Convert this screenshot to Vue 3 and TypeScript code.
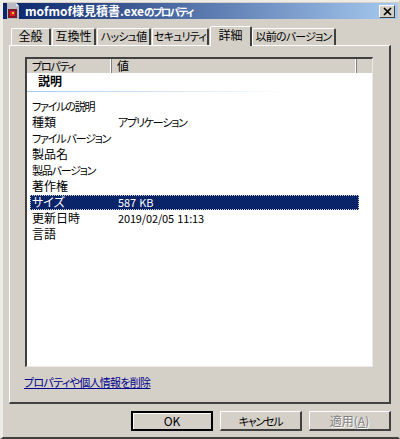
<script setup lang="ts">
const tabs = [
  { label: '全般', w: 40 },
  { label: '互換性', w: 44 },
  { label: 'ハッシュ値', w: 54, tight: true },
  { label: 'セキュリティ', w: 57, tight: true },
  { label: '詳細', w: 42, active: true },
  { label: '以前のバージョン', w: 84, tight: true },
]
const rows = [
  { k: 'ファイルの説明', v: '', tight: true },
  { k: '種類', v: 'アプリケーション', kanaVal: true },
  { k: 'ファイル バージョン', v: '', tight: true },
  { k: '製品名', v: '' },
  { k: '製品バージョン', v: '', tight: true },
  { k: '著作権', v: '' },
  { k: 'サイズ', v: '587 KB', selected: true },
  { k: '更新日時', v: '2019/02/05 11:13' },
  { k: '言語', v: '' },
]
</script>

<template>
  <div class="window">
    <div class="titlebar">
      <svg class="appicon" width="16" height="16" viewBox="0 0 16 16">
        <path d="M2 0h9l3 3v13H2z" fill="#b9b9c4" />
        <path d="M11 0l3 3h-3z" fill="#e8e8ee" />
        <rect x="3" y="6" width="9" height="9" fill="#7a1a2a" />
        <rect x="5" y="8" width="5" height="5" fill="#e02020" />
        <rect x="7" y="9" width="2" height="2" fill="#e8c030" />
      </svg>
      <span class="title">mofmof様見積書.exe<span class="title-kana">のプロパティ</span></span>
      <button class="close">
        <svg width="9" height="9" viewBox="0 0 9 9"><path d="M1 1l7 7M8 1L1 8" stroke="#000" stroke-width="1.7" fill="none" /></svg>
      </button>
    </div>

    <div class="tabs">
      <div
        v-for="t in tabs"
        :key="t.label"
        class="tab"
        :class="{ active: t.active, tight: t.tight }"
        :style="{ width: t.w + 'px' }"
      >{{ t.label }}</div>
    </div>

    <div class="panel">
      <div class="list">
        <div class="head">
          <div class="hcell c1"><span class="tight">プロパティ</span></div>
          <div class="hcell c2">値</div>
          <div class="hcell c3"></div>
        </div>
        <div class="group">
          <div class="grouplabel">説明</div>
          <div class="groupline"></div>
        </div>
        <div class="rows">
          <div v-for="r in rows" :key="r.k" class="row" :class="{ selected: r.selected }">
            <span class="key" :class="{ tight: r.tight }">{{ r.k }}</span>
            <span class="val" :class="{ tight: r.kanaVal }">{{ r.v }}</span>
          </div>
        </div>
      </div>
      <a class="link">プロパティや個人情報を削除</a>
    </div>

    <div class="buttons">
      <button class="btn default">OK</button>
      <button class="btn"><span class="tight">キャンセル</span></button>
      <button class="btn disabled">適用(<u>A</u>)</button>
    </div>
  </div>
</template>

<style>
html, body { margin: 0; background: #d4d0c8; }
</style>

<style scoped>
.window {
  box-sizing: border-box;
  width: 400px;
  height: 439px;
  overflow: hidden;
  background: #d4d0c8;
  border-style: solid;
  border-width: 2px 2px 2px 3px;
  border-color: #eeece6 #d4d0c8 #404040 #eeece6;
  font-family: "Noto Sans CJK JP", "Liberation Sans", sans-serif;
  font-size: 12px;
  font-feature-settings: "palt";
  color: #000;
  display: flex;
  flex-direction: column;
}
.titlebar {
  height: 16px;
  margin-top: 1px;
  flex: none;
  display: flex;
  align-items: center;
  padding: 0 3px 0 2px;
  background: linear-gradient(to right, #0a246a, #a6caf0);
}
.appicon { flex: none; margin-right: 4px; }
.title {
  color: #fff;
  font-weight: 700;
  font-size: 12px;
  line-height: 16px;
  white-space: nowrap;
  flex: 1;
}
.title-kana { font-size: 10.5px; letter-spacing: -1.7px; }
.close {
  box-sizing: border-box;
  width: 16px;
  height: 13px;
  padding: 0;
  margin: 0;
  display: flex;
  align-items: center;
  justify-content: center;
  background: #d4d0c8;
  border-style: solid;
  border-width: 1px;
  border-color: #fff #404040 #404040 #fff;
}
.tabs {
  flex: none;
  height: 19px;
  margin-top: 7px;
  padding-left: 8px;
  display: flex;
  align-items: flex-end;
  gap: 1px;
  position: relative;
  z-index: 1;
}
.tab {
  box-sizing: border-box;
  height: 17px;
  text-align: center;
  line-height: 14px;
  font-size: 12px;
  white-space: nowrap;
  background: #d4d0c8;
  border-style: solid;
  border-width: 1px 2px 0 1px;
  border-color: #fff #404040 #fff #fff;
  border-radius: 2px 2px 0 0;
}
.tab.tight { font-size: 11px; letter-spacing: -0.8px; }
.tab.active {
  height: 20px;
  margin: 0 -1px -1px 0;
  position: relative;
  line-height: 16px;
}
.tight { font-size: 11px; letter-spacing: -1.2px; }
.panel {
  box-sizing: border-box;
  flex: none;
  width: 382px;
  height: 359px;
  margin-left: 6px;
  padding: 11px 16px 0 15px;
  border-style: solid;
  border-width: 1px 2px 2px 1px;
  border-color: #fff #404040 #404040 #fff;
  background: #d4d0c8;
}
.list {
  box-sizing: border-box;
  width: 348px;
  height: 310px;
  background: #fff;
  border-style: solid;
  border-width: 2px 1px 1px 2px;
  border-color: #404040 #ece9e2 #ece9e2 #404040;
  display: flex;
  flex-direction: column;
}
.head {
  flex: none;
  height: 14px;
  display: flex;
  background: #d4d0c8;
}
.hcell {
  box-sizing: border-box;
  line-height: 14px;
  padding-left: 5px;
  font-size: 12px;
  border-right: 1px solid #808080;
  box-shadow: inset -1px 0 0 #fff;
}
.c1 { width: 85px; }
.c2 { width: 245px; }
.c3 { flex: 1; border: 0; box-shadow: none; }
.group { flex: none; height: 19px; }
.grouplabel {
  padding-left: 11px;
  font-weight: 700;
  line-height: 16px;
  height: 18px;
}
.groupline {
  height: 1px;
  margin-right: 80px;
  background: linear-gradient(to right, #a6caf0, #fff);
}
.rows { margin-top: 7px; padding-left: 3px; padding-right: 13px; }
.row {
  box-sizing: border-box;
  height: 16px;
  line-height: 14px;
  display: flex;
  padding-left: 2px;
  white-space: nowrap;
}
.key { width: 86px; flex: none; }
.val { flex: 1; font-size: 11px; letter-spacing: -0.15px; word-spacing: 1px; }
.val.tight { letter-spacing: -1.2px; }
.row.selected {
  height: 15px;
  margin-bottom: 1px;
  background: #0a246a;
  color: #fff;
  outline: 1px dotted #d4d0c8;
  outline-offset: -1px;
}
.link {
  display: block;
  margin: 8px 0 0 -1px;
  font-size: 11px;
  letter-spacing: -0.7px;
  line-height: 14px;
  color: #00008b;
  text-decoration: underline;
  white-space: nowrap;
}
.buttons {
  flex: none;
  margin-top: 7px;
  padding-left: 128px;
  display: flex;
  gap: 7px;
}
.btn {
  box-sizing: border-box;
  width: 82px;
  height: 20px;
  padding: 0;
  margin: 0;
  font: inherit;
  font-size: 12px;
  line-height: 16px;
  background: #d4d0c8;
  color: #000;
  border-style: solid;
  border-width: 1px 2px 2px 1px;
  border-color: #fff #404040 #404040 #fff;
}
.btn.default {
  border: 2px solid #000;
  box-shadow: inset 1px 1px 0 #fff;
}
.btn.disabled {
  color: #808080;
  text-shadow: 1px 1px 0 #fff;
}
</style>
